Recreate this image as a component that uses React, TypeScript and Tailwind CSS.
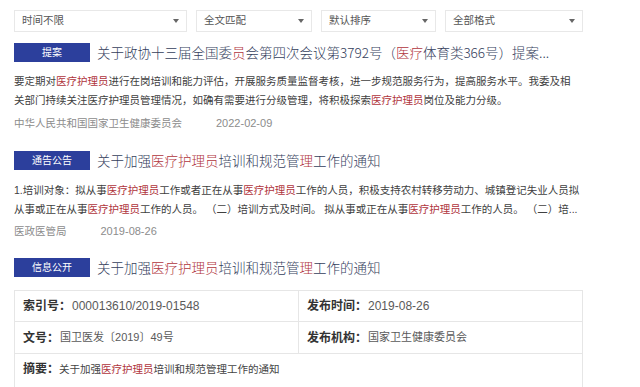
import React from 'react';

const H: React.FC<{ children: React.ReactNode }> = ({ children }) => (
  <span className="text-[#b0343c]">{children}</span>
);

const Select: React.FC<{ label: string; width: string }> = ({ label, width }) => (
  <div className={`${width} h-[22px] border border-[#e8e8e8] bg-white flex items-center justify-between pl-[7px] pr-[7px]`}>
    <span className="text-[10.5px] text-[#555]">{label}</span>
    <span className="w-0 h-0 border-l-[3px] border-r-[3px] border-t-[4px] border-l-transparent border-r-transparent border-t-[#666]" />
  </div>
);

const Header: React.FC<{ badge: string; children: React.ReactNode }> = ({ badge, children }) => (
  <div className="flex items-center h-[19px]">
    <div className="w-[76px] h-[19px] bg-[#2c3f9c] text-white text-[10px] flex items-center justify-center shrink-0">
      {badge}
    </div>
    <div className="ml-[7px] text-[13.5px] text-[#34405c] whitespace-nowrap font-light font-['Noto_Sans_CJK_SC',sans-serif]">
      {children}
    </div>
  </div>
);

const Line: React.FC<{ children: React.ReactNode }> = ({ children }) => (
  <div className="text-[10.5px] leading-[19px] text-[#404040] whitespace-nowrap">{children}</div>
);

const Source: React.FC<{ org: string; date: string; gap: string }> = ({ org, date, gap }) => (
  <div className="flex items-center h-[19px] text-[#8c8c8c]">
    <span className="text-[10.5px]">{org}</span>
    <span className={`${gap} text-[11px]`}>{date}</span>
  </div>
);

export default function App() {
  return (
    <div className="w-[640px] h-[387px] overflow-hidden bg-white pl-[14px] pt-[10px] font-['Liberation_Sans','Noto_Sans_CJK_SC',sans-serif]">
      {/* filters */}
      <div className="flex gap-[9px]">
        <Select label="时间不限" width="w-[173px]" />
        <Select label="全文匹配" width="w-[116px]" />
        <Select label="默认排序" width="w-[115px]" />
        <Select label="全部格式" width="w-[138px]" />
      </div>

      {/* result 1 */}
      <div className="mt-[11px]">
        <Header badge="提案">
          关于政协十三届全国委<H>员</H>会第四次会议第3792号（<H>医疗</H>体育类366号）提案...
        </Header>
        <div className="mt-[10px]">
          <Line>
            要定期对<H>医疗护理员</H>进行在岗培训和能力评估，开展服务质量监督考核，进一步规范服务行为，提高服务水平。我委及相
          </Line>
          <Line>
            关部门持续关注医疗护理员管理情况，如确有需要进行分级管理，将积极探索<H>医疗护理员</H>岗位及能力分级。
          </Line>
        </div>
        <div className="mt-[4px]">
          <Source org="中华人民共和国国家卫生健康委员会" date="2022-02-09" gap="ml-[34px]" />
        </div>
      </div>

      {/* result 2 */}
      <div className="mt-[18px]">
        <Header badge="通告公告">
          关于加强<H>医疗护理员</H>培训和规范管<H>理</H>工作的通知
        </Header>
        <div className="mt-[11px]">
          <Line>
            1.培训对象：拟从事<H>医疗护理员</H>工作或者正在从事<H>医疗护理员</H>工作的人员，积极支持农村转移劳动力、城镇登记失业人员拟
          </Line>
          <Line>
            从事或正在从事<H>医疗护理员</H>工作的人员。 （二）培训方式及时间。 拟从事或正在从事<H>医疗护理员</H>工作的人员。 （二）培...
          </Line>
        </div>
        <div className="mt-[3px]">
          <Source org="医政医管局" date="2019-08-26" gap="ml-[34px]" />
        </div>
      </div>

      {/* result 3 */}
      <div className="mt-[17px]">
        <Header badge="信息公开">
          关于加强<H>医疗护理员</H>培训和规范管<H>理</H>工作的通知
        </Header>
        <div className="mt-[13px] w-[569px] border border-[#e6e6e6] text-[#333]">
          <div className="grid grid-cols-[284px_1fr] h-[31px] border-b border-[#e6e6e6]">
            <div className="flex items-center pl-[8px] border-r border-[#e6e6e6]">
              <span className="text-[12px] font-bold">索引号：</span>
              <span className="text-[12px] text-[#5a5a5a] ml-[1px]">000013610/2019-01548</span>
            </div>
            <div className="flex items-center pl-[8px]">
              <span className="text-[12px] font-bold">发布时间：</span>
              <span className="text-[12px] text-[#5a5a5a] ml-[1px]">2019-08-26</span>
            </div>
          </div>
          <div className="grid grid-cols-[284px_1fr] h-[32px] border-b border-[#e6e6e6]">
            <div className="flex items-center pl-[8px] border-r border-[#e6e6e6]">
              <span className="text-[12px] font-bold">文号：</span>
              <span className="text-[11px] text-[#5a5a5a] ml-[1px]">国卫医发〔2019〕49号</span>
            </div>
            <div className="flex items-center pl-[8px]">
              <span className="text-[12px] font-bold">发布机构：</span>
              <span className="text-[11px] text-[#5a5a5a] ml-[1px]">国家卫生健康委员会</span>
            </div>
          </div>
          <div className="h-[40px] pl-[8px] pt-[7px] flex items-start">
            <span className="text-[12px] font-bold leading-[17px]">摘要：</span>
            <span className="text-[10.5px] text-[#444] leading-[17px]">
              关于加强<H>医疗护理员</H>培训和规范管理工作的通知
            </span>
          </div>
        </div>
      </div>
    </div>
  );
}
